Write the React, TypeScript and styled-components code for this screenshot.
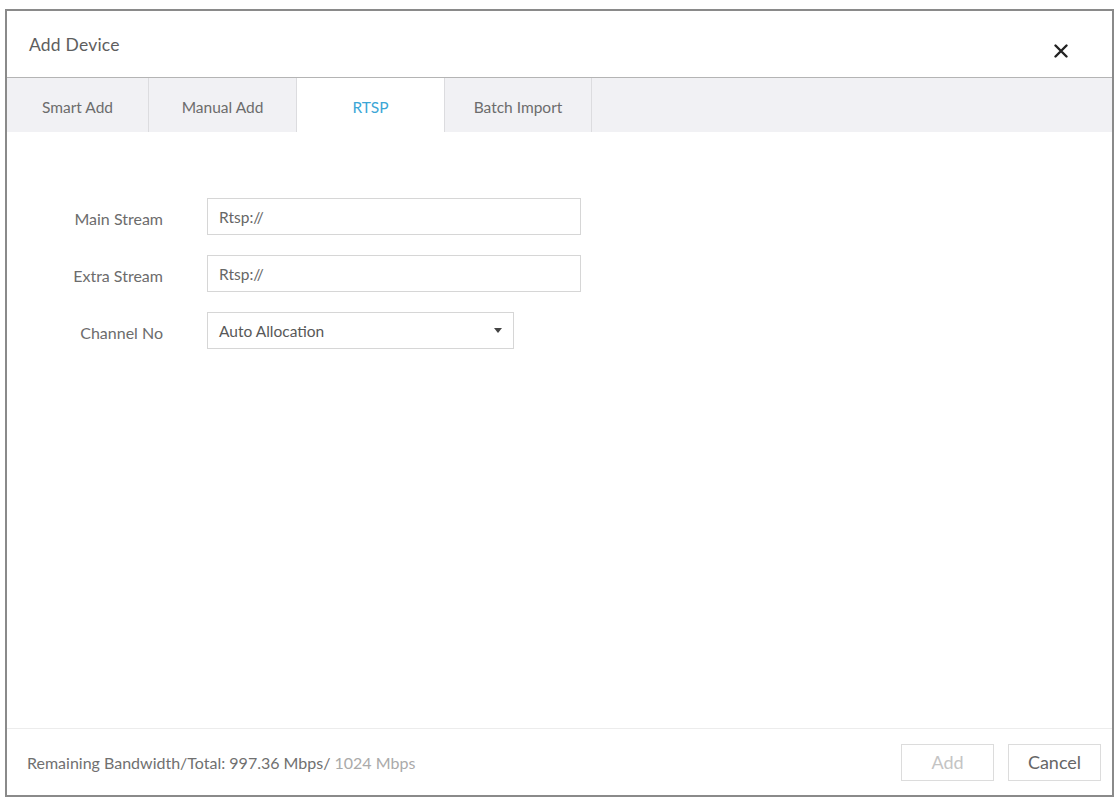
import React, { useState } from 'react';
import styled, { createGlobalStyle } from 'styled-components';

const GlobalStyle = createGlobalStyle`
  html, body {
    margin: 0;
    padding: 0;
    background: #ffffff;
  }
  body {
    font-family: Lato, "Open Sans", "Liberation Sans", sans-serif;
    color: #555;
  }
`;

const Page = styled.div`
  width: 1117px;
  height: 798px;
  box-sizing: border-box;
  padding: 9px 3px 1px 5px;
  display: flex;
`;

const Dialog = styled.div`
  flex: 1;
  display: flex;
  flex-direction: column;
  border: 2px solid #8a8a8a;
  background: #ffffff;
  box-sizing: border-box;
`;

const Header = styled.div`
  height: 66px;
  flex-shrink: 0;
  display: flex;
  align-items: center;
  justify-content: space-between;
  padding: 0 43px 0 22px;
  border-bottom: 1px solid #b4b4b4;
`;

const Title = styled.h1`
  margin: 0;
  font-size: 17.5px;
  font-weight: 400;
  color: #5e5e5e;
  letter-spacing: 0.2px;
`;

const CloseButton = styled.button`
  border: none;
  background: transparent;
  padding: 0;
  width: 16px;
  height: 16px;
  display: flex;
  align-items: center;
  justify-content: center;
  cursor: pointer;
  margin-top: 14px;
`;

const TabBar = styled.div`
  height: 54px;
  flex-shrink: 0;
  display: flex;
  background: #f1f1f4;
`;

const Tab = styled.button<{ $active: boolean; $width: number }>`
  width: ${p => p.$width}px;
  border: none;
  border-right: 1px solid #dcdcdf;
  background: ${p => (p.$active ? '#ffffff' : 'transparent')};
  color: ${p => (p.$active ? '#3ba6d6' : '#6c6c6c')};
  font-family: inherit;
  font-size: 15.5px;
  padding: 3px 0 0;
  cursor: pointer;
`;

const Body = styled.div`
  flex: 1;
  padding: 66px 0 0 0;
  display: flex;
  flex-direction: column;
  gap: 20px;
`;

const Row = styled.div`
  display: flex;
  align-items: center;
`;

const Label = styled.label`
  width: 156px;
  text-align: right;
  padding: 3px 44px 0 0;
  box-sizing: content-box;
  font-size: 16px;
  color: #6c6c6c;
`;

const TextInput = styled.input`
  width: 374px;
  height: 37px;
  box-sizing: border-box;
  border: 1px solid #d6d6d6;
  padding: 0 11px;
  font-family: inherit;
  font-size: 15.5px;
  color: #666;
  outline: none;
  background: #fff;
`;

const Select = styled.div`
  width: 307px;
  height: 37px;
  box-sizing: border-box;
  border: 1px solid #d6d6d6;
  padding: 0 11px;
  display: flex;
  align-items: center;
  justify-content: space-between;
  font-size: 15.5px;
  color: #585858;
  cursor: pointer;
`;

const Caret = styled.span`
  width: 0;
  height: 0;
  border-left: 4.5px solid transparent;
  border-right: 4.5px solid transparent;
  border-top: 5px solid #444;
`;

const Footer = styled.div`
  height: 66px;
  flex-shrink: 0;
  border-top: 1px solid #ececec;
  display: flex;
  align-items: center;
  justify-content: space-between;
  padding: 0 11px 0 20px;
`;

const Bandwidth = styled.div`
  font-size: 16px;
  color: #707070;
`;

const Total = styled.span`
  color: #aaa;
`;

const Actions = styled.div`
  display: flex;
  gap: 14px;
`;

const FooterButton = styled.button<{ $disabled?: boolean }>`
  width: 93px;
  height: 37px;
  border: 1px solid #dcdcdc;
  background: #fff;
  font-family: inherit;
  font-size: 18px;
  color: ${p => (p.$disabled ? '#c4c4c4' : '#666')};
  cursor: ${p => (p.$disabled ? 'default' : 'pointer')};
`;

const tabs = [
  { id: 'smart', label: 'Smart Add', width: 142 },
  { id: 'manual', label: 'Manual Add', width: 148 },
  { id: 'rtsp', label: 'RTSP', width: 148 },
  { id: 'batch', label: 'Batch Import', width: 147 },
];

const App: React.FC = () => {
  const [active, setActive] = useState('rtsp');

  return (
    <>
      <GlobalStyle />
      <Page>
        <Dialog>
          <Header>
            <Title>Add Device</Title>
            <CloseButton aria-label="Close">
              <svg width="14" height="14" viewBox="0 0 14 14">
                <path d="M1.5 1.5 L12.5 12.5 M12.5 1.5 L1.5 12.5" stroke="#222" strokeWidth="2.4" strokeLinecap="round" />
              </svg>
            </CloseButton>
          </Header>

          <TabBar>
            {tabs.map(t => (
              <Tab key={t.id} $active={active === t.id} $width={t.width} onClick={() => setActive(t.id)}>
                {t.label}
              </Tab>
            ))}
          </TabBar>

          <Body>
            <Row>
              <Label>Main Stream</Label>
              <TextInput defaultValue="Rtsp://" />
            </Row>
            <Row>
              <Label>Extra Stream</Label>
              <TextInput defaultValue="Rtsp://" />
            </Row>
            <Row>
              <Label>Channel No</Label>
              <Select>
                Auto Allocation
                <Caret />
              </Select>
            </Row>
          </Body>

          <Footer>
            <Bandwidth>
              Remaining Bandwidth/Total: 997.36 Mbps/ <Total>1024 Mbps</Total>
            </Bandwidth>
            <Actions>
              <FooterButton $disabled>Add</FooterButton>
              <FooterButton>Cancel</FooterButton>
            </Actions>
          </Footer>
        </Dialog>
      </Page>
    </>
  );
};

export default App;
